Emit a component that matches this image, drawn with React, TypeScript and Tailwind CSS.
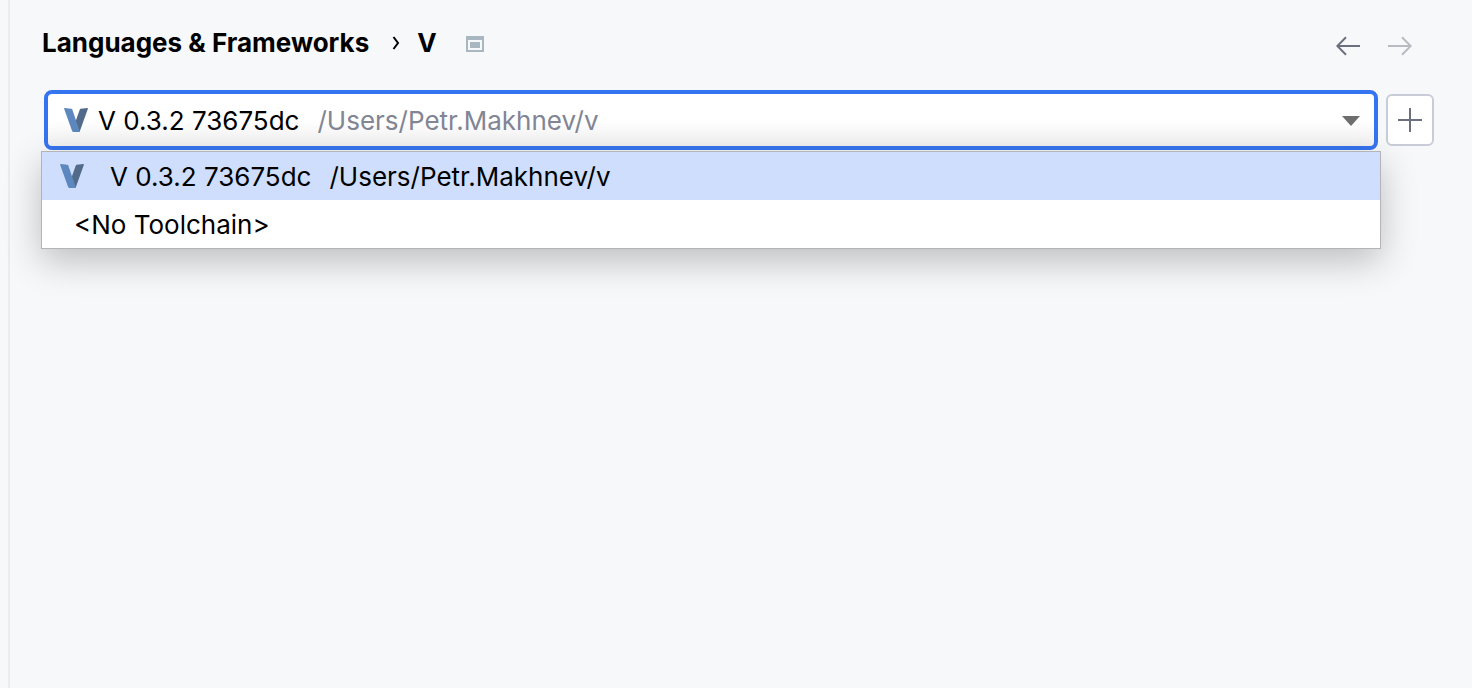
import { useState } from "react";

type Toolchain = { label: string; path?: string };

const toolchains: Toolchain[] = [
  { label: "V 0.3.2 73675dc", path: "/Users/Petr.Makhnev/v" },
  { label: "<No Toolchain>" },
];

function VLogo() {
  return (
    <svg className="size-6 shrink-0" viewBox="0 0 24 24" aria-hidden="true">
      <path d="M16.7.7 23.4 0q.8 0 .5.8L15.9 23q-.4 1-1.4 1H11L11.6 13.2 15.8 1.5q.2-.7.9-.8Z" fill="#536b8a" />
      <path d="M.6 0 7.3.7q.7.1 1 .8L15.7 23.2q.2.8-.7.8H9.6q-1.1 0-1.5-1L.1.8Q-.1 0 .6 0Z" fill="#5d87bf" />
    </svg>
  );
}

function Header() {
  return (
    <header className="flex h-[90px] items-start justify-between pl-0.5 pr-[22px]">
      <nav aria-label="Breadcrumb" className="flex h-[86px] items-center text-[26px] leading-8 font-bold">
        <a href="#languages">Languages &amp; Frameworks</a>
        <svg className="ml-[23px] h-4 w-2" viewBox="0 0 8 16" fill="none" stroke="#000" strokeWidth="2" aria-hidden="true">
          <path d="m1.5 2 4.5 6-4.5 6" />
        </svg>
        <h1 className="ml-[17px]">V</h1>
        <svg className="mt-0.5 ml-[29px] h-4 w-[18px]" viewBox="0 0 18 16" aria-label="Project level settings" role="img">
          <path fill="#a9b7c1" fillRule="evenodd" d="M0 0h18v16H0ZM2 4v10h14V4ZM4 6h10v6H4Z" />
        </svg>
      </nav>
      <div className="flex h-[92px] items-center gap-7">
        <button type="button" aria-label="Back" className="text-[#6c707e]">
          <svg className="h-5 w-6" viewBox="0 0 24 20" fill="none" stroke="currentColor" strokeWidth="2" aria-hidden="true">
            <path d="M24 10H1.5M10 1.3 1.3 10l8.7 8.7" />
          </svg>
        </button>
        <button type="button" aria-label="Forward" disabled className="text-[#b9bbc0]">
          <svg className="h-5 w-6" viewBox="0 0 24 20" fill="none" stroke="currentColor" strokeWidth="2" aria-hidden="true">
            <path d="M0 10h22.5M14 1.3l8.7 8.7-8.7 8.7" />
          </svg>
        </button>
      </div>
    </header>
  );
}

function ToolchainSelect() {
  const [open, setOpen] = useState(true);
  const [selected, setSelected] = useState(0);
  const current = toolchains[selected];

  return (
    <div className="relative min-w-0 flex-1">
      <button
        type="button"
        role="combobox"
        aria-label="Toolchain"
        aria-expanded={open}
        aria-controls="toolchain-list"
        onClick={() => setOpen(!open)}
        className="flex h-[60px] w-full items-center rounded-lg border-4 border-[#3574f0] bg-linear-to-b from-white from-50% to-[#f2f2f3] pr-3.5 pl-4 text-left outline-none"
      >
        {current.path && <VLogo />}
        <span className="ml-2.5 pt-0.5 whitespace-nowrap">{current.label}</span>
        <span className="ml-[18px] truncate pt-0.5 text-[#818594]">{current.path}</span>
        <svg className="mt-0.5 ml-auto h-2.5 w-[18px] shrink-0" viewBox="0 0 18 10" aria-hidden="true">
          <path d="M0 0h18L9 10Z" fill="#6e6e6e" />
        </svg>
      </button>
      {open && (
        <ul
          id="toolchain-list"
          role="listbox"
          aria-label="Toolchains"
          className="absolute top-full -right-[3px] -left-[3px] mt-px border border-[#b3b4b8] bg-white shadow-[0_12px_36px_rgba(0,0,0,0.24)]"
        >
          {toolchains.map((item, index) => (
            <li
              key={item.label}
              role="option"
              aria-selected={index === selected}
              onClick={() => {
                setSelected(index);
                setOpen(false);
              }}
              className={
                index === selected
                  ? "flex h-12 cursor-default items-center bg-[#cfdefc] pl-[18px]"
                  : "flex h-12 cursor-default items-center bg-white pl-[18px]"
              }
            >
              {item.path && <VLogo />}
              <span className={item.path ? "ml-[26px] pt-0.5" : "ml-3.5 pt-0.5"}>{item.label}</span>
              {item.path && <span className="ml-[18px] pt-0.5">{item.path}</span>}
            </li>
          ))}
        </ul>
      )}
    </div>
  );
}

export default function App() {
  return (
    <div className="flex min-h-screen bg-[#f7f8fa] pl-2 font-['Inter',sans-serif] text-[26px] leading-8 text-black">
      <main className="min-w-0 flex-1 border-l-2 border-[#ebecf0] pr-[38px] pl-[30px]">
        <Header />
        <div className="flex items-center gap-2 pl-1">
          <ToolchainSelect />
          <button
            type="button"
            aria-label="Add toolchain"
            className="flex h-[52px] w-12 items-center justify-center rounded-md border-2 border-[#c9ccd6] bg-white text-[#6c707e]"
          >
            <svg className="size-6" viewBox="0 0 24 24" fill="none" stroke="currentColor" strokeWidth="2" aria-hidden="true">
              <path d="M12 0v24M0 12h24" />
            </svg>
          </button>
        </div>
      </main>
    </div>
  );
}
